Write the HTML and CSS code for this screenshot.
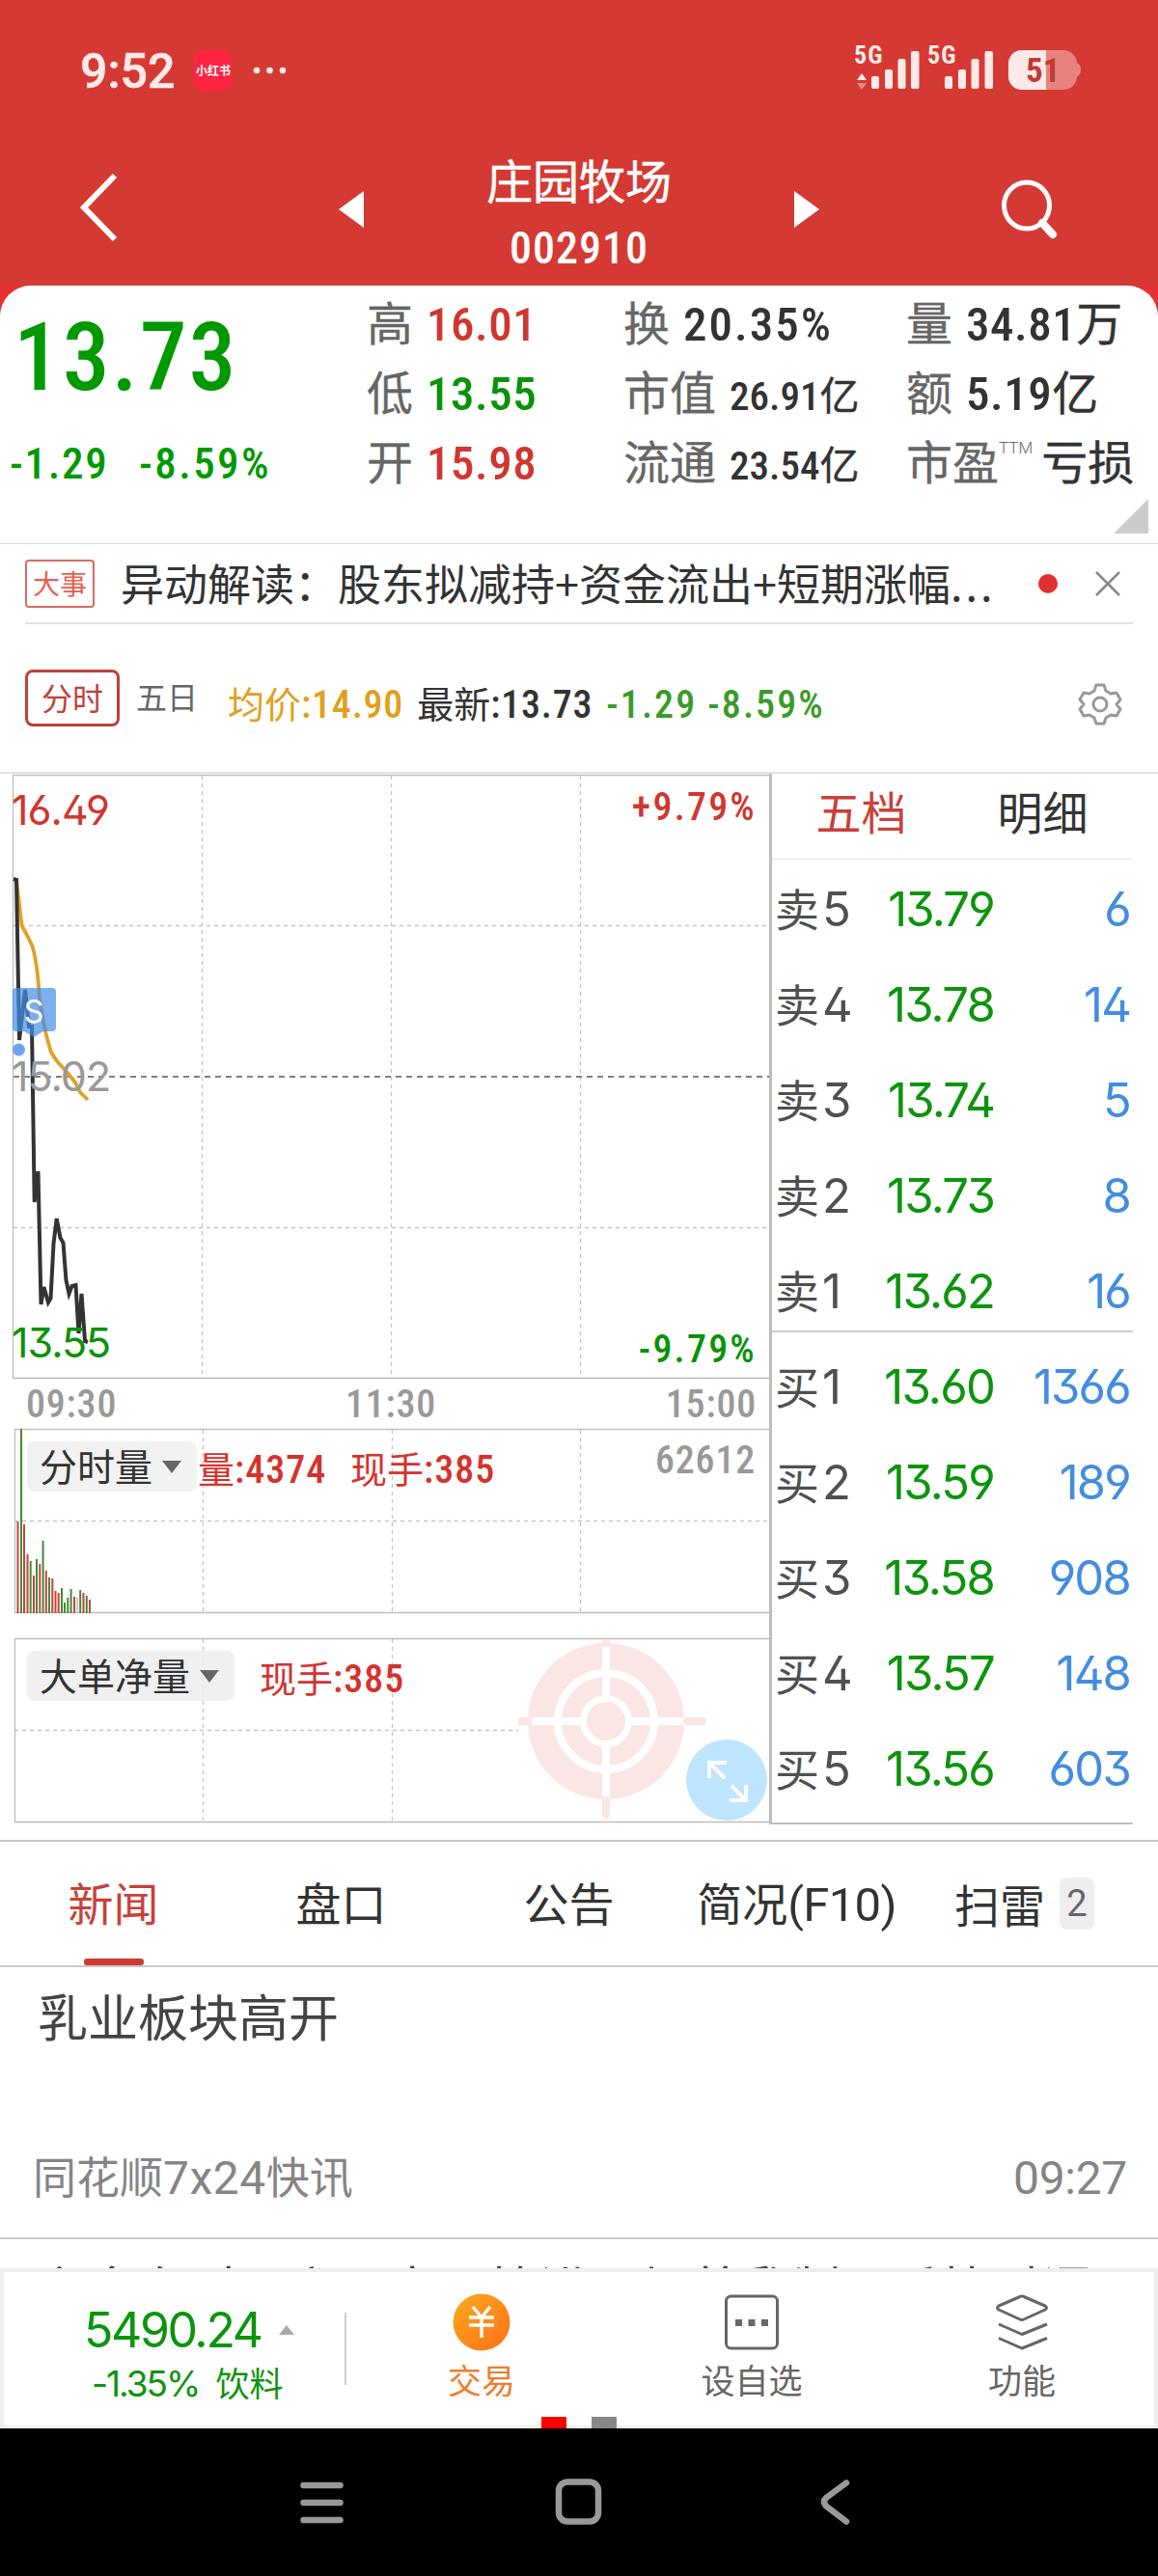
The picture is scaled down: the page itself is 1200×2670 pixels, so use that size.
FILE: index.html
```
<!DOCTYPE html>
<html lang="zh-CN">
<head>
<meta charset="utf-8">
<title>庄园牧场 002910</title>
<link rel="stylesheet" href="styles.css">
</head>
<body>
<div class="phone">
  <header class="top">
    <div class="status">
      <span class="clock">9:52</span>
      <span class="app-badge">小红书</span>
      <svg class="more" width="34" height="8" viewBox="0 0 34 8" fill="#fdeae8"><circle cx="4" cy="4" r="3.3"/><circle cx="17.500" cy="4" r="3.300"/><circle cx="31" cy="4" r="3.300"/></svg>
      <svg class="signals" width="240" height="90" viewBox="880 26 240 90">
        <g fill="#fdeae8">
          <text class="net" x="884" y="66">5G</text>
          <path d="M892 76l5 7h-10z"/>
          <path d="M892 93l5-7h-10z" opacity=".45"/>
          <rect x="902" y="79" width="8" height="13" rx="2"/><rect x="916" y="72" width="8" height="20" rx="2"/><rect x="929.500" y="61" width="8" height="31" rx="2"/><rect x="943" y="53" width="8.500" height="39" rx="2"/>
          <text class="net" x="960" y="66">5G</text>
          <rect x="978" y="79" width="8" height="13" rx="2"/><rect x="992" y="72" width="8" height="20" rx="2"/><rect x="1005.500" y="61" width="8" height="31" rx="2"/><rect x="1019.500" y="53" width="8.500" height="39" rx="2"/>
        </g>
        <rect x="1044" y="52" width="71" height="41" rx="14" fill="#e6837e"/>
        <path d="M1114 65q5 1 5 7t-5 8z" fill="#e6837e"/>
        <path d="M1083 52v41h-25a14 14 0 0 1-14-14v-13a14 14 0 0 1 14-14z" fill="#fdeae8"/>
        <text class="level" x="1062" y="85">51</text>
      </svg>
    </div>
    <div class="titlebar">
      <svg class="back" width="44" height="74" viewBox="0 0 44 74"><path d="M38 4L6 37l32 33" fill="none" stroke="#fff" stroke-width="6"/></svg>
      <svg class="prev" width="26" height="40" viewBox="0 0 26 40"><path d="M26 1v38L0 20z" fill="#fff"/></svg>
      <div class="stock"><div class="name">庄园牧场</div><div class="code">002910</div></div>
      <svg class="next" width="26" height="40" viewBox="0 0 26 40"><path d="M0 1v38l26-19z" fill="#fff"/></svg>
      <svg class="search" width="62" height="64" viewBox="0 0 62 64" fill="none" stroke="#fff"><ellipse cx="27" cy="28" rx="23.500" ry="24" stroke-width="5"/><path d="M43 46l11 12" stroke-width="8" stroke-linecap="round"/></svg>
    </div>
  </header>

  <div class="corner-bg">
  <section class="quote">
    <div class="price">
      <div class="last">13.73</div>
      <div class="change"><span class="diff">-1.29</span><span class="pct">-8.59%</span></div>
    </div>
    <div class="col c1">
      <div><b>高</b><i class="up">16.01</i></div>
      <div><b>低</b><i class="down">13.55</i></div>
      <div><b>开</b><i class="up">15.98</i></div>
    </div>
    <div class="col c2">
      <div><b>换</b><i class="wide">20.35%</i></div>
      <div><b>市值</b><i class="sm">26.91<u>亿</u></i></div>
      <div><b>流通</b><i class="sm">23.54<u>亿</u></i></div>
    </div>
    <div class="col c3">
      <div><b>量</b><i>34.81<u>万</u></i></div>
      <div><b>额</b><i>5.19<u>亿</u></i></div>
      <div><b>市盈</b><s>TTM</s><i class="loss"><u>亏损</u></i></div>
    </div>
    <svg class="expand" width="36" height="36" viewBox="0 0 36 36"><path d="M36 0v36H0z" fill="#ccc"/></svg>
  </section>
  </div>

  <section class="event">
    <span class="tag">大事</span>
    <span class="headline">异动解读：股东拟减持+资金流出+短期涨幅<em>...</em></span>
    <span class="dot"></span>
    <svg width="28" height="28" viewBox="0 0 28 28" stroke="#888" stroke-width="2.500"><path d="M2 2l24 24M26 2L2 26"/></svg>
  </section>

  <section class="periods">
    <span class="on">分时</span>
    <span class="off">五日</span>
    <div class="legend">
      <span class="avg"><u>均价</u>:14.90</span>
      <span><u>最新</u>:13.73</span>
      <span class="g">-1.29</span>
      <span class="g">-8.59%</span>
    </div>
    <svg class="gear" width="48" height="48" viewBox="0 0 48 48" fill="none" stroke="#999" stroke-width="3" stroke-linejoin="round"><path d="M20 4h8l2 6 5 3 6-1 4 7-4 5 4 5-4 7-6-1-5 3-2 6h-8l-2-6-5-3-6 1-4-7 4-5-4-5 4-7 6 1 5-3z"/><circle cx="24" cy="24" r="7"/></svg>
  </section>

  <section class="market">
    <svg class="chart" width="800" height="1106" viewBox="0 802 800 1106">
      <g class="grid">
        <path d="M209.500 804v624M405.500 804v624M601.500 804v624M14 959.500h783M14 1272.500h783M210.500 1482v190M406.500 1482v190M601.500 1482v190M15 1576.500h782M210.500 1699v190M406.500 1699v190M15 1793.500h522"/>
      </g>
      <path class="mid" d="M14 1116h783"/>
      <g class="frame"><path d="M797 803.500H13.500V1428.500H797M797 1481.500H15.500V1671.500H797M797 1698.500H15.500V1888.500H797"/></g>
      <path d="M798.500 802v1089" stroke="#bdbdbd" stroke-width="3"/>

      <path class="avg-line" d="M17 912L22.700 960 26.700 967 33.300 980Q37 992 39 1011L41.700 1042 47.700 1072 52.700 1090Q56 1096 60 1101L71.700 1114 78 1122 83 1132 91 1140"/>
      <path class="px-line" d="M14 911L17 912 20 1078 26 1026 30 1064 33 1064 35.700 1246 39.500 1214 42.500 1352 45.500 1334 50 1350 52.500 1346 55.500 1289 58.700 1263 62.500 1283 65.500 1288 68.500 1327 71.500 1341 74.500 1333 78.500 1332 81.500 1382 84.500 1341 88 1390 91 1391"/>

      <text class="mi up" x="12" y="855">16.49</text>
      <text class="mi flat" x="12" y="1131">15.02</text>
      <text class="mi down" x="12" y="1407">13.55</text>
      <text class="din pc up" x="784" y="850" text-anchor="end">+9.79%</text>
      <text class="din pc down" x="784" y="1412" text-anchor="end">-9.79%</text>
      <text class="din flat" x="27" y="1469">09:30</text>
      <text class="din flat" x="405" y="1469" text-anchor="middle">11:30</text>
      <text class="din flat" x="784" y="1469" text-anchor="end">15:00</text>
      <text class="din flat" x="783" y="1527" text-anchor="end">62612</text>

      <path d="M17 1024h37q4 0 4 4v37q0 4-4 4h-9l-10 6-10-6h-8q-4 0-4-4v-37q0-4 4-4z" fill="#438de6" opacity=".7"/>
      <text class="sell" x="35" y="1060" text-anchor="middle">S</text>
      <ellipse cx="19.500" cy="1088" rx="6.500" ry="6.500" fill="#6aa4ee"/>

      <g stroke-width="2">
        <path stroke="#c0453f" d="M18.500 1577V1672M25 1580V1672M28.500 1611V1672M35 1633V1672M41.300 1621V1672M47.800 1628V1672M54.300 1636V1672M57.500 1649V1672M60.700 1651V1672M77 1655V1672M86.500 1651V1672M93 1658V1672"/>
        <path stroke="#438a35" d="M22 1481V1672M31.700 1618V1672M38 1616V1672M44.600 1597V1672M51 1635V1672M64 1646V1672M67 1661V1672M70.300 1656V1672M73.600 1647V1672M83.200 1648V1672M89.800 1654V1672"/>
        <path stroke="#ccc" d="M80 1656V1672"/>
      </g>

      <rect x="28" y="1494" width="176" height="52" rx="8" fill="#f2f2f2"/>
      <text class="zh" x="41" y="1535">分时量</text>
      <path d="M168 1514h20l-10 13z" fill="#666"/>
      <text class="din tick" x="205" y="1537"><tspan class="zhr">量</tspan>:4374</text>
      <text class="din tick" x="363" y="1537"><tspan class="zhr">现手</tspan>:385</text>

      <rect x="28" y="1711" width="215" height="52" rx="8" fill="#eee" fill-opacity=".9"/>
      <text class="zh" x="41" y="1752">大单净量</text>
      <path d="M207 1731h20l-10 13z" fill="#666"/>
      <text class="din tick" x="269" y="1754"><tspan class="zhr">现手</tspan>:385</text>

      <g stroke="#fae6e5" fill="none">
        <circle cx="628" cy="1784" r="67.500" stroke-width="27"/>
        <circle cx="628" cy="1784" r="36.500" stroke-width="19"/>
        <circle cx="628" cy="1784" r="20" fill="#fae6e5" stroke="none"/>
        <path d="M628 1707v50M628 1811v52M551 1784h50M655 1784h54" stroke="#fff" stroke-width="8"/>
        <path d="M628 1699v8M537 1784h10" stroke-width="8"/>
        <path d="M628 1866v15M712 1784h16" stroke-width="8" stroke-linecap="round"/>
      </g>
      <circle cx="753" cy="1845" r="42" fill="#bfe4ff"/>
      <path d="M735 1843v-16h18M735 1827l16 16M773 1850v16h-17M773 1866l-15-15" fill="none" stroke="#fff" stroke-width="4"/>
    </svg>
    <div class="book">
      <div class="book-tabs"><span class="on">五档</span><span>明细</span></div>
      <div class="side asks">
        <div><b>卖<em>5</em></b><i>13.79</i><span>6</span></div>
        <div><b>卖<em>4</em></b><i>13.78</i><span>14</span></div>
        <div><b>卖<em>3</em></b><i>13.74</i><span>5</span></div>
        <div><b>卖<em>2</em></b><i>13.73</i><span>8</span></div>
        <div><b>卖<em>1</em></b><i>13.62</i><span>16</span></div>
      </div>
      <div class="side bids">
        <div><b>买<em>1</em></b><i>13.60</i><span>1366</span></div>
        <div><b>买<em>2</em></b><i>13.59</i><span>189</span></div>
        <div><b>买<em>3</em></b><i>13.58</i><span>908</span></div>
        <div><b>买<em>4</em></b><i>13.57</i><span>148</span></div>
        <div><b>买<em>5</em></b><i>13.56</i><span>603</span></div>
      </div>
    </div>
  </section>

  <nav class="tabs">
    <span class="on">新闻</span>
    <span>盘口</span>
    <span>公告</span>
    <span>简况<em>(F10)</em></span>
    <span>扫雷<small>2</small></span>
  </nav>

  <section class="news">
    <article>
      <h2>乳业板块高开</h2>
      <div class="meta"><span>同花顺<em>7x24</em>快讯</span><time>09:27</time></div>
    </article>
    <article class="cut"><h2>主多台时二六，市明管进，加养乳制品千快时语</h2></article>
  </section>

  <footer class="bar">
    <div class="index">
      <div class="idx">5490.24<svg width="16" height="10" viewBox="0 0 16 10"><path d="M8 0l8 10H0z" fill="#aaa"/></svg></div>
      <div class="sector">-1.35%<u>饮料</u></div>
    </div>
    <div class="act trade">
      <svg width="60" height="60" viewBox="0 0 60 60"><defs><linearGradient id="coin" x1="0" y1="0" x2="1" y2="1"><stop offset="0" stop-color="#fcaa1c"/><stop offset="1" stop-color="#ff7018"/></linearGradient></defs><circle cx="30" cy="30" r="29.500" fill="url(#coin)"/><path d="M21 14l9 11 9-11M17 25h26M17 33h26M30 25v21" fill="none" stroke="#fff" stroke-width="3.500"/></svg>
      <span>交易</span>
    </div>
    <div class="act">
      <svg width="60" height="60" viewBox="0 0 60 60"><rect x="3.500" y="3" width="53" height="54" rx="5" fill="none" stroke="#666" stroke-width="3"/><path d="M13 27h7v7h-7zM26.500 27h7v7h-7zM40 27h7v7h-7z" fill="#666"/></svg>
      <span>设自选</span>
    </div>
    <div class="act">
      <svg width="60" height="60" viewBox="0 0 60 60" fill="none" stroke="#666" stroke-width="3" stroke-linejoin="round"><path d="M28 3.500q2-1 4 0l22 9.500q3 2 0 4l-22 10q-2 1-4 0L6 17q-3-2 0-4zM6 32l24 10.500L56 32M6 46.500L30 57l26-10.500"/></svg>
      <span>功能</span>
    </div>
    <div class="pager"><span class="cur"></span><span></span></div>
  </footer>

  <div class="sysnav">
    <svg width="1200" height="153" viewBox="0 2517 1200 153" fill="none" stroke="#999" stroke-width="6.500" stroke-linecap="round" stroke-linejoin="round">
      <path d="M314.500 2576h38M314.500 2594h38M314.500 2612h38"/>
      <rect x="579" y="2572.500" width="41" height="41" rx="9"/>
      <path d="M877 2573.500L856 2589q-4 4 0 8.500l21 16"/>
    </svg>
  </div>
</div>
</body>
</html>
```
FILE: styles.css
```
* { box-sizing: border-box; margin: 0; padding: 0; }
body { width: 1200px; background: #fff; font-family: "Noto Sans CJK SC", sans-serif; color: #333; }
b, i, u, s, em { font-weight: inherit; font-style: normal; text-decoration: none; }
svg { display: block; flex: none; }
.phone { width: 1200px; height: 2670px; overflow: hidden; display: flex; flex-direction: column; }
.up { color: #d0362f; fill: #d0362f; }
.down { color: #0a920a; fill: #0a920a; }
.flat { fill: #999; }

/* header */
.top { height: 296px; background: #d43a33; color: #fff; }
.status { height: 146px; display: flex; align-items: center; padding-left: 83px; }
.clock { width: 118px; font: 500 50px/60px Roboto, sans-serif; -webkit-text-stroke: .6px #fdeae8; color: #fdeae8; padding-top: 2px; }
.app-badge { width: 40px; height: 42px; border-radius: 9px; background: #ff2442; font-size: 12px; line-height: 41px; text-align: center; font-weight: 700; white-space: nowrap; }
.more { margin-left: 21px; }
.signals { margin: -4px 0 0 585px; }
.net { font: 700 26px "Roboto Condensed", Roboto, sans-serif; letter-spacing: 1px; }
.level { font: 700 35px "Roboto Condensed", Roboto, sans-serif; fill: #c03a34; }
.titlebar { height: 150px; display: flex; align-items: flex-start; padding-left: 81px; }
.back { margin-top: 32px; }
.prev { margin: 51px 0 0 226px; }
.stock { width: 446px; display: flex; flex-direction: column; align-items: center; }
.name { font-size: 48px; line-height: 60px; margin: 9px 0 0 0; -webkit-text-stroke: .5px #fff; }
.code { font: 500 46px/56px "Roboto Condensed", sans-serif; letter-spacing: 1px; margin-top: 14px; }
.next { margin-top: 51px; }
.search { margin: 39px 0 0 188px; }

/* quote */
.corner-bg { background: #e93030; }
.quote { height: 268px; background: #fff; border-radius: 32px 32px 0 0; display: flex; position: relative; border-bottom: 1px solid #ddd; }
.price { width: 380px; color: #090; font-family: "Roboto Condensed", sans-serif; font-weight: 500; }
.last { font-size: 98px; line-height: 110px; margin: 20px 0 0 14px; letter-spacing: 1.8px; }
.change { display: flex; font-size: 45px; line-height: 54px; margin-top: 28px; padding-left: 10px; letter-spacing: 1.7px; }
.diff { width: 134px; }
.pct { letter-spacing: 2.4px; }
.col div { display: flex; align-items: baseline; height: 72px; line-height: 72px; white-space: nowrap; }
.col { padding-top: 0; font-size: 48px; }
.col b { color: #666; -webkit-text-stroke: .3px #666; }
.col i { font-family: "Roboto Condensed", "Noto Sans CJK SC", sans-serif; font-weight: 500; font-size: 49px; margin-left: 14px; letter-spacing: .5px; }
.col .wide { letter-spacing: 2px; }
.col u { font-family: "Noto Sans CJK SC", sans-serif; font-weight: 400; font-size: 48px; letter-spacing: 0; -webkit-text-stroke: .4px #333; }
.c1 { width: 266px; }
.c2 { width: 293px; }
.col .sm { font-size: 41px; letter-spacing: 0; }
.col .sm u { font-size: 41px; }
.col s { font: 300 17px/20px Roboto, sans-serif; color: #666; align-self: flex-start; margin-top: 14px; }
.col .loss { margin-left: 9px; }
.expand { position: absolute; right: 10px; bottom: 10px; }

/* event strip */
.event { height: 83px; margin: 0 26px; border-bottom: 2px solid #e2e2e2; display: flex; align-items: center; }
.tag { width: 72px; height: 50px; border: 2px solid #dc6a62; border-radius: 4px; color: #e8604f; font-size: 28px; line-height: 44px; text-align: center; }
.headline { font-size: 45px; line-height: 66px; margin: -2px 0 0 27px; width: 910px; white-space: nowrap; letter-spacing: 0; }
.headline em { letter-spacing: 3px; }
.dot { width: 20px; height: 20px; border-radius: 50%; background: #e03030; margin: 0 38px 0 41px; }

/* periods */
.periods { height: 155px; display: flex; align-items: flex-start; padding: 0 26px; border-bottom: 2px solid #e2e2e2; }
.periods .on { width: 98px; height: 59px; margin-top: 47px; border: 3px solid #c0403a; border-radius: 8px; color: #c0403a; font-size: 32px; line-height: 51px; text-align: center; }
.off { font-size: 32px; line-height: 53px; margin: 48px 0 0 17px; color: #666; }
.legend { display: flex; margin: 56px 0 0 31px; font: 500 40px/56px "Roboto Condensed", "Noto Sans CJK SC", sans-serif; width: 880px; white-space: nowrap; }
.legend span { margin-right: 14px; letter-spacing: .8px; line-height: 56px; }
.legend u { font: 400 38px/50px "Noto Sans CJK SC", sans-serif; letter-spacing: 0; }
.avg { color: #e0a01c; }
.legend .g { color: #3a9a28; margin-right: 11px; letter-spacing: 2.1px; }
.gear { margin-top: 59px; }

/* chart and order book */
.market { height: 1107px; display: flex; border-bottom: 2px solid #c8c8c8; }
.chart { overflow: hidden; }
.grid path { stroke: #c4c4c4; stroke-width: 1.3; stroke-dasharray: 4 4; fill: none; }
.mid { stroke: #555; stroke-width: 1.6; stroke-dasharray: 6 5; }
.frame path { stroke: #bdbdbd; stroke-width: 1.3; fill: none; }
.avg-line { fill: none; stroke: #dea224; stroke-width: 3.8; }
.px-line { fill: none; stroke: #333; stroke-width: 4; }
.mi { font: 400 43px Inter, sans-serif; font-feature-settings: "ss01", "cv09"; letter-spacing: -1px; }
.din { font: 500 40px "Roboto Condensed", sans-serif; letter-spacing: .8px; }
.din.pc { letter-spacing: 2.2px; }
.zh { font-size: 39px; fill: #333; }
.din.tick { fill: #d5322e; letter-spacing: 1px; }
.din .zhr { font: 400 38px "Noto Sans CJK SC", sans-serif; letter-spacing: 0; }
.sell { font: 400 32px Inter, sans-serif; fill: #fff; }
.book { width: 374px; height: 1089px; border-bottom: 2px solid #bdbdbd; }
.book-tabs { display: flex; height: 89px; border-bottom: 1px solid #e4e4e4; font-size: 47px; line-height: 75px; }
.book-tabs span { width: 50%; text-align: center; }
.book-tabs .on { color: #c8413a; padding-right: 2px; }
.side div { display: flex; align-items: baseline; height: 99px; line-height: 99px; padding-left: 3px; }
.asks { height: 490px; border-bottom: 2px solid #ccc; }
.bids { padding-top: 5px; }
.side b { width: 90px; font-size: 46px; color: #505050; }
.side em, .side i, .side span { font-family: Inter, sans-serif; font-feature-settings: "ss01", "cv09"; font-size: 49px; letter-spacing: -1.8px; }
.side em { margin-left: 3px; }
.side i { width: 137px; text-align: right; color: #0d940d; }
.side span { width: 141px; text-align: right; color: #438de0; }

/* tabs */
.tabs { height: 130px; display: flex; border-bottom: 2px solid #c8c8c8; font-size: 47px; line-height: 124px; white-space: nowrap; }
.tabs span { width: 236px; text-align: center; padding-right: 1px; }
.tabs .on { color: #c8413a; position: relative; }
.tabs .on::after { content: ""; position: absolute; left: 87px; bottom: 0; width: 62px; height: 7px; border-radius: 3px; background: #cf3a33; }
.tabs em { font-family: Roboto, sans-serif; font-size: 49px; letter-spacing: -.7px; }
.tabs span:last-child { width: 256px; display: flex; align-items: center; margin-left: -10px; padding-left: 55px; }
.tabs small { width: 36px; height: 54px; border-radius: 8px; background: #eee; color: #666; font: 400 38px/54px Roboto, sans-serif; text-align: center; margin-left: 15px; }

/* news */
.news { height: 312px; overflow: hidden; }
article { height: 282px; border-bottom: 2px solid #c8c8c8; padding: 14px 32px 0 34px; }
h2 { font-weight: 400; font-size: 52px; line-height: 72px; color: #444; padding-left: 5px; white-space: nowrap; }
.meta { display: flex; justify-content: space-between; color: #858585; font-size: 45px; line-height: 64px; margin-top: 98px; align-items: baseline; }
.meta em, .meta time { font-family: Roboto, sans-serif; font-size: 48px; letter-spacing: .5px; }
.meta time { letter-spacing: -.3px; }
.cut { border: 0; padding-top: 14px; }

/* bottom bar */
.bar { height: 166px; border: 4px solid #eee; border-bottom-width: 3px; background: #fff; display: flex; position: relative; }
.index { width: 355px; flex: none; height: 75px; margin-top: 42px; border-right: 2px solid #ccc; color: #0d940d; }
.idx { display: flex; align-items: center; font: 400 50px/46px Inter, sans-serif; letter-spacing: -2.4px; padding-left: 83px; height: 46px; margin-top: -5px; }
.idx svg { margin-left: 18px; }
.sector { display: flex; align-items: baseline; font: 400 37px/60px Inter, sans-serif; letter-spacing: -2px; padding-left: 91px; white-space: nowrap; margin-top: 1px; }
.sector u { font: 400 35px/60px "Noto Sans CJK SC", sans-serif; letter-spacing: 0; margin-left: 17px; }
.act { width: 280px; padding-top: 22px; display: flex; flex-direction: column; align-items: center; font-size: 35px; line-height: 50px; color: #666; flex: none; }
.act span { margin-top: 4px; }
.trade { color: #ee7d2e; }
.pager { position: absolute; left: 557px; bottom: -3px; display: flex; gap: 26px; }
.pager span { width: 26px; height: 12px; background: #888; }
.pager .cur { background: #f00; }
.sysnav { height: 153px; background: #000; }
```
